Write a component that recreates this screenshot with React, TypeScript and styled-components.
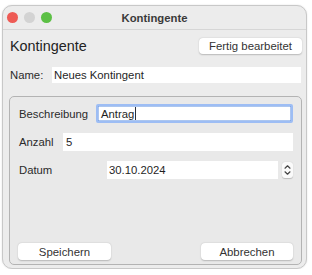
import React from "react";
import styled, { createGlobalStyle } from "styled-components";

const Global = createGlobalStyle`
  html, body { margin: 0; padding: 0; background: #ffffff; }
  body { font-family: "Liberation Sans", Arial, sans-serif; color: #262626; }
`;

const Window = styled.div`
  box-sizing: border-box;
  margin: 5px 0 0 2px;
  width: 305px;
  height: 264px;
  border: 1px solid #c8c8c8;
  border-radius: 10px;
  background: #ececec;
  display: flex;
  flex-direction: column;
  overflow: hidden;
  box-shadow: 0 0 2px rgba(0, 0, 0, 0.12);
`;

const TitleBar = styled.div`
  box-sizing: border-box;
  height: 24px;
  border-bottom: 1px solid #d6d6d6;
  display: grid;
  grid-template-columns: 1fr auto 1fr;
  align-items: center;
  padding: 0 4px;
`;

const Lights = styled.div`
  display: flex;
  gap: 6px;
`;

const Light = styled.span<{ $c: string }>`
  width: 11px;
  height: 11px;
  border-radius: 50%;
  background: ${(p) => p.$c};
`;

const Title = styled.div`
  font-size: 11.3px;
  font-weight: bold;
  color: #3a3a3a;
`;

const Content = styled.div`
  flex: 1;
  display: flex;
  flex-direction: column;
  padding: 8px 4px 3px 6px;
  min-height: 0;
`;

const HeaderRow = styled.div`
  display: flex;
  justify-content: space-between;
  align-items: center;
  height: 16px;
`;

const Heading = styled.div`
  font-size: 14.4px;
  color: #222;
  padding-left: 1px;
`;

const Button = styled.div<{ $w: number; $h: number }>`
  box-sizing: border-box;
  width: ${(p) => p.$w}px;
  height: ${(p) => p.$h}px;
  background: #ffffff;
  border-radius: 4px;
  box-shadow: 0 0.5px 1.5px rgba(0, 0, 0, 0.22);
  display: flex;
  align-items: center;
  justify-content: center;
  font-size: 11.4px;
  color: #333;
`;

const NameRow = styled.div`
  display: flex;
  align-items: center;
  margin-top: 13px;
  height: 16px;
  padding-right: 1px;
`;

const Label = styled.div<{ $w: number }>`
  width: ${(p) => p.$w}px;
  flex: none;
  font-size: 11.3px;
  color: #2b2b2b;
  padding-left: 1px;
  box-sizing: border-box;
`;

const Field = styled.div<{ $focused?: boolean; $pad?: number }>`
  box-sizing: border-box;
  flex: 1;
  height: 100%;
  background: #ffffff;
  display: flex;
  align-items: center;
  padding-left: ${(p) => p.$pad ?? 3}px;
  font-size: 11.3px;
  color: #1f1f1f;
  border: ${(p) => (p.$focused ? "2px solid #9dbdf4" : "none")};
  box-shadow: ${(p) => (p.$focused ? "inset 0 0 0 0.5px #5b8de0" : "none")};
  border-radius: ${(p) => (p.$focused ? "2px" : "0")};
`;

const Caret = styled.span`
  display: inline-block;
  width: 1px;
  height: 13px;
  background: #2a2f3a;
  margin-left: 1px;
`;

const Group = styled.div`
  box-sizing: border-box;
  flex: 1;
  margin-top: 13px;
  border: 1px solid #b3b3b3;
  border-radius: 5px;
  background: #e9e9e9;
  padding: 7px 8px 4px 8px;
  display: flex;
  flex-direction: column;
  gap: 10px;
`;

const Row = styled.div<{ $h: number }>`
  display: flex;
  align-items: center;
  height: ${(p) => p.$h}px;
`;

const Stepper = styled.div`
  flex: none;
  width: 11px;
  height: 16px;
  margin-left: 4px;
  background: #fafafa;
  border-radius: 3px;
  box-shadow: 0 0.5px 1px rgba(0, 0, 0, 0.2);
  display: flex;
  align-items: center;
  justify-content: center;
`;

const ButtonRow = styled.div`
  margin-top: auto;
  display: flex;
  justify-content: space-between;
`;

export default function App() {
  return (
    <>
      <Global />
      <Window>
        <TitleBar>
          <Lights>
            <Light $c="#ee5b55" />
            <Light $c="#d3d3d3" />
            <Light $c="#5cc045" />
          </Lights>
          <Title>Kontingente</Title>
          <span />
        </TitleBar>
        <Content>
          <HeaderRow>
            <Heading>Kontingente</Heading>
            <Button $w={103} $h={16}>Fertig bearbeitet</Button>
          </HeaderRow>
          <NameRow>
            <Label $w={43}>Name:</Label>
            <Field $pad={2}>Neues Kontingent</Field>
          </NameRow>
          <Group>
            <Row $h={19}>
              <Label $w={78}>Beschreibung</Label>
              <Field $focused $pad={3}>
                Antrag
                <Caret />
              </Field>
            </Row>
            <Row $h={18}>
              <Label $w={45}>Anzahl</Label>
              <Field $pad={3}>5</Field>
            </Row>
            <Row $h={18}>
              <Label $w={89}>Datum</Label>
              <Field $pad={2}>30.10.2024</Field>
              <Stepper>
                <svg width="9" height="14" viewBox="0 0 9 14">
                  <path d="M2 5.2 L4.5 2.8 L7 5.2" fill="none" stroke="#444" strokeWidth="1.2" strokeLinecap="round" strokeLinejoin="round" />
                  <path d="M2 8.8 L4.5 11.2 L7 8.8" fill="none" stroke="#444" strokeWidth="1.2" strokeLinecap="round" strokeLinejoin="round" />
                </svg>
              </Stepper>
            </Row>
            <ButtonRow>
              <Button $w={93} $h={17}>Speichern</Button>
              <Button $w={92} $h={17}>Abbrechen</Button>
            </ButtonRow>
          </Group>
        </Content>
      </Window>
    </>
  );
}
